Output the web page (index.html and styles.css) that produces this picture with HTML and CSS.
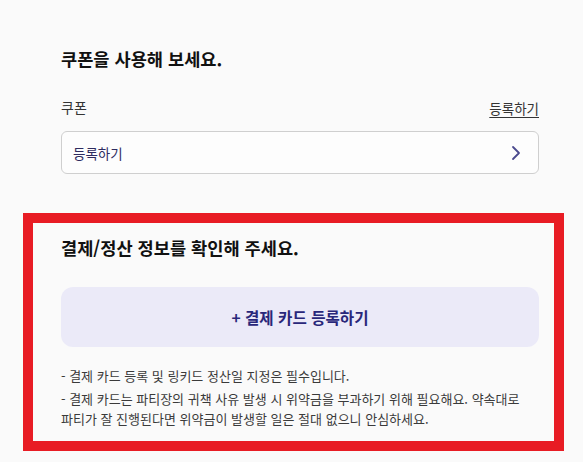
FILE: index.html
```html
<!DOCTYPE html>
<html lang="ko">
<head>
    <meta charset="UTF-8">
    <title>파티 결제 정보</title>
    <link rel="stylesheet" href="styles.css">
</head>
<body>

    <div class="coupon-section">
        <h2 class="section-title">쿠폰을 사용해 보세요.</h2>

        <div class="field-head">
            <span class="field-label">쿠폰</span>
            <a href="#" class="field-link">등록하기</a>
        </div>

        <button type="button" class="coupon-input">
            <span>등록하기</span>
            <svg width="10" height="16" viewBox="0 0 10 16">
                <polyline points="2,2 8,8 2,14" fill="none" stroke="#4b4a8e" stroke-width="1.8" stroke-linecap="round" stroke-linejoin="round"/>
            </svg>
        </button>
    </div>

    <div class="payment-section">
        <h2 class="section-title">결제/정산 정보를 확인해 주세요.</h2>

        <button type="button" class="card-button">+ 결제 카드 등록하기</button>

        <p class="note">- 결제 카드 등록 및 링키드 정산일 지정은 필수입니다.</p>
        <p class="note">- 결제 카드는 파티장의 귀책 사유 발생 시 위약금을 부과하기 위해 필요해요. 약속대로 파티가 잘 진행된다면 위약금이 발생할 일은 절대 없으니 안심하세요.</p>
    </div>

</body>
</html>
```

FILE: styles.css
```css
body {
    margin: 0;
    background-color: #fafafa;
    font-family: "Noto Sans CJK KR", "Noto Sans", sans-serif;
    color: #111;
    word-break: keep-all;
}
.coupon-section {
    padding: 47px 44px 0 61px;
}
.section-title {
    margin: 0;
    font-size: 17.6px;
    line-height: 24px;
    font-weight: 700;
    color: #111;
}
.field-head {
    display: flex;
    justify-content: space-between;
    align-items: flex-end;
    margin-top: 26px;
}
.field-label {
    font-size: 14px;
    line-height: 20px;
    color: #333;
}
.field-link {
    font-size: 13.5px;
    line-height: 18px;
    color: #333;
    text-decoration: underline;
    text-underline-offset: 3px;
}
.coupon-input {
    display: flex;
    justify-content: space-between;
    align-items: center;
    width: 100%;
    height: 43px;
    margin-top: 14px;
    padding: 0 17px 0 11px;
    box-sizing: border-box;
    background: #fdfdfd;
    border: 1px solid #cfcfcf;
    border-radius: 6px;
    font-family: inherit;
    font-size: 13.5px;
    color: #2e2b5f;
    cursor: pointer;
}
.payment-section {
    margin: 39px 19px 0 23px;
    padding: 13px 15px 12px 28px;
    border: 10px solid #e81c24;
}
.card-button {
    display: block;
    width: 100%;
    height: 60px;
    margin-top: 27px;
    margin-bottom: 19px;
    background: #ebeaf8;
    border: none;
    border-radius: 12px;
    font-family: inherit;
    font-size: 15.6px;
    font-weight: 700;
    color: #29277a;
    cursor: pointer;
}
.note {
    margin: 0 0 3px;
    font-size: 13px;
    line-height: 20px;
    color: #3a3a3a;
}
.note:last-child {
    margin-bottom: 0;
}
```
